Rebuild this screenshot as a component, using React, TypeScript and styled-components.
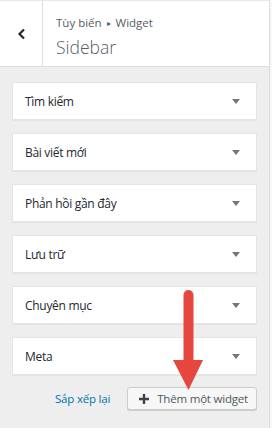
import React from 'react';
import styled, { createGlobalStyle } from 'styled-components';

const widgets = ['Tìm kiếm', 'Bài viết mới', 'Phản hồi gần đây', 'Lưu trữ', 'Chuyên mục', 'Meta'];

const App: React.FC = () => {
    return (
        <>
            <GlobalStyle />
            <Page>
                <Panel>
                    <Header>
                        <BackButton aria-label="Quay lại">
                            <svg width="9" height="12" viewBox="0 0 9 12">
                                <path d="M7 1.5 L2.5 6 L7 10.5" fill="none" stroke="#23282d" strokeWidth="2.2" />
                            </svg>
                        </BackButton>
                        <TitleBlock>
                            <Crumb>Tùy biến <CrumbSep>▸</CrumbSep> Widget</Crumb>
                            <Title>Sidebar</Title>
                        </TitleBlock>
                    </Header>

                    <WidgetList>
                        {widgets.map(w => (
                            <WidgetCard key={w}>
                                <WidgetTitle>{w}</WidgetTitle>
                                <Caret />
                            </WidgetCard>
                        ))}
                    </WidgetList>

                    <Actions>
                        <ReorderLink href="#">Sắp xếp lại</ReorderLink>
                        <AddButton>
                            <svg width="10" height="10" viewBox="0 0 10 10">
                                <path d="M5 0 V10 M0 5 H10" stroke="#3c4146" strokeWidth="2.4" />
                            </svg>
                            Thêm một widget
                        </AddButton>
                    </Actions>

                    <Pointer width="32" height="104" viewBox="0 0 32 104">
                        <rect x="11.5" y="2" width="10" height="74" rx="5" fill="#e5473f" />
                        <polygon points="1,72 31,72 16.5,102" fill="#e5473f" />
                    </Pointer>
                </Panel>
            </Page>
        </>
    )
}

const GlobalStyle = createGlobalStyle`
html, body {
    margin:0;
    padding:0;
    background:#f7f7f7;
}
body {
    font-family: "Open Sans", "Noto Sans", sans-serif;
}
`

const Page = styled.div`
width:272px;
height:428px;
overflow:hidden;
`

const Panel = styled.div`
position:relative;
width:269px;
height:428px;
background:#eeeeee;
border-right:1px solid #dcdcdc;
`

const Header = styled.div`
display:flex;
background:#fff;
border-top:1px solid #e8e8e8;
border-bottom:1px solid #dddddd;
box-sizing:border-box;
height:67px;
`

const BackButton = styled.div`
width:42px;
border-right:1px solid #dddddd;
display:flex;
align-items:center;
justify-content:center;
`

const TitleBlock = styled.div`
display:flex;
flex-direction:column;
padding:13px 0 0 13px;
color:#555d66;
`

const Crumb = styled.div`
font-size:11.5px;
line-height:18px;
`

const CrumbSep = styled.span`
font-size:8px;
vertical-align:1px;
margin:0 2px;
`

const Title = styled.div`
font-size:17.5px;
font-weight:300;
line-height:26px;
margin-top:2px;
`

const WidgetList = styled.div`
display:flex;
flex-direction:column;
gap:13px;
padding:15px 12px 0 12px;
`

const WidgetCard = styled.div`
height:38px;
box-sizing:border-box;
background:#fff;
border:1px solid #e5e5e5;
box-shadow:0 1px 1px rgba(0,0,0,0.04);
display:flex;
align-items:center;
justify-content:space-between;
padding:0 16px 0 12px;
`

const WidgetTitle = styled.span`
font-size:12px;
font-weight:500;
letter-spacing:-0.3px;
color:#23282d;
`

const Caret = styled.span`
width:0;
height:0;
border-left:4px solid transparent;
border-right:4px solid transparent;
border-top:5px solid #72777c;
`

const Actions = styled.div`
display:flex;
justify-content:flex-end;
align-items:center;
gap:17px;
padding:12px 12px 0 0;
`

const ReorderLink = styled.a`
font-size:11.5px;
letter-spacing:-0.2px;
color:#0073aa;
text-decoration:none;
`

const AddButton = styled.button`
display:flex;
align-items:center;
gap:8px;
height:23px;
box-sizing:border-box;
padding:0 8px 0 11px;
background:#f7f7f7;
border:1px solid #cccccc;
border-radius:3px;
box-shadow:0 1px 0 #cccccc;
font-family:"Open Sans", "Noto Sans", sans-serif;
font-size:11.5px;
letter-spacing:-0.2px;
color:#50575e;
`

const Pointer = styled.svg`
position:absolute;
left:172px;
top:288px;
`

export default App;
